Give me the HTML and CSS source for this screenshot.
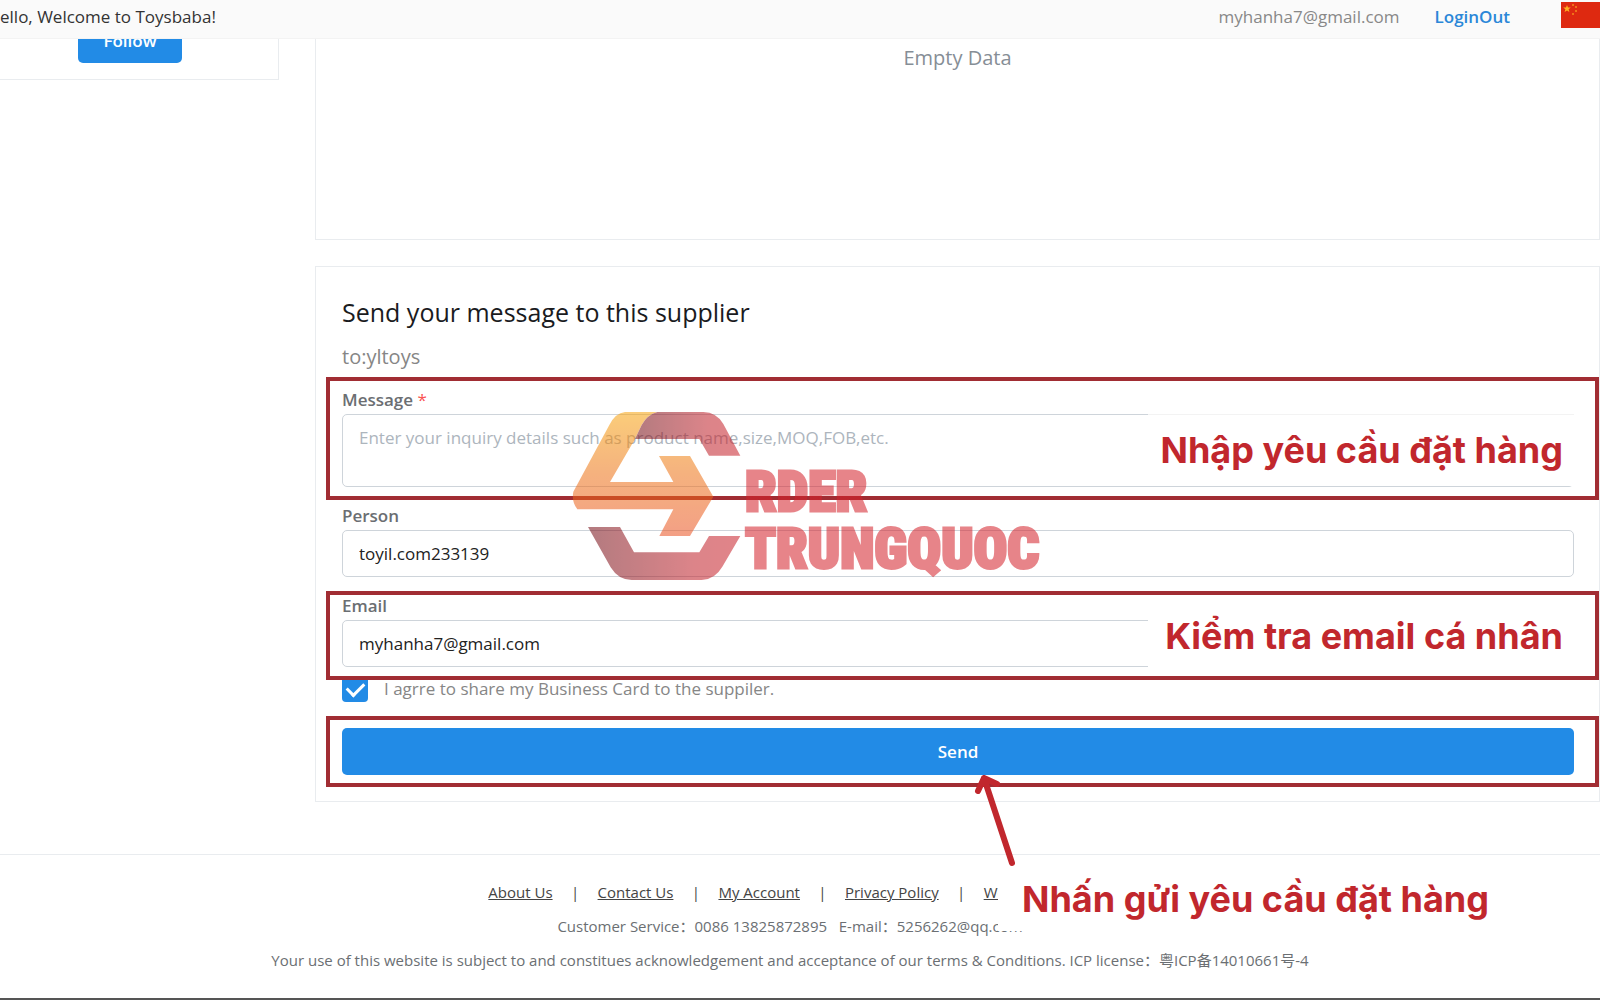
FILE: index.html
```html
<!DOCTYPE html>
<html lang="en">
<head>
    <meta charset="UTF-8">
    <meta name="viewport" content="width=device-width, initial-scale=1.0">
    <title>Toysbaba</title>
    <link rel="stylesheet" href="styles.css">
</head>
<body>
    <header class="topbar">
        <div class="welcome">ello, Welcome to Toysbaba!</div>
        <div class="account">
            <span class="user">myhanha7@gmail.com</span>
            <a class="logout" href="#">LoginOut</a>
            <svg class="flag" viewBox="0 0 39 26">
                <rect width="39" height="26" fill="#de2910"/>
                <path d="M6 3l1 2.600h2.800l-2.200 1.700.8 2.700L6 8.400 3.600 10l.8-2.700-2.200-1.700H5z" fill="#ffb020"/>
                <g fill="#f58a1c">
                    <circle cx="12" cy="3" r="1"/>
                    <circle cx="15" cy="5" r="1"/>
                    <circle cx="15" cy="9" r="1"/>
                    <circle cx="12" cy="12" r="1"/>
                </g>
            </svg>
        </div>
    </header>

    <main class="main">
        <aside class="side">
            <button class="follow" type="button">Follow</button>
        </aside>
        <div class="content">
            <section class="card empty">Empty Data</section>

            <section class="card inquiry">
                <h2>Send your message to this supplier</h2>
                <p class="to">to:yltoys</p>
                <form>
                    <div class="field field-message">
                        <label for="message">Message <em>*</em></label>
                        <textarea id="message" placeholder="Enter your inquiry details such as product name,size,MOQ,FOB,etc."></textarea>
                        <div class="mark"></div>
                        <div class="note">Nhập yêu cầu đặt hàng</div>
                    </div>
                    <div class="field">
                        <label for="person">Person</label>
                        <input type="text" id="person" value="toyil.com233139">
                    </div>
                    <div class="field field-email">
                        <label for="email">Email</label>
                        <input type="text" id="email" value="myhanha7@gmail.com">
                        <div class="mark"></div>
                        <div class="note">Kiểm tra email cá nhân</div>
                    </div>
                    <div class="agree">
                        <input type="checkbox" id="agree" checked>
                        <label for="agree">I agrre to share my Business Card to the suppiler.</label>
                    </div>
                    <div class="submit">
                        <button class="send" type="button">Send</button>
                        <div class="mark"></div>
                        <svg class="arrow" viewBox="0 0 50 100">
                            <path d="M38 90L10 5M4 18L10 5L23 11"/>
                        </svg>
                    </div>
                </form>

                <!-- watermark -->
                <svg class="watermark" viewBox="0 0 1500 570">
                    <defs>
                        <linearGradient id="orange" x1="0" y1="0" x2="0" y2="1">
                            <stop offset="0" stop-color="#f8a40d"/>
                            <stop offset="0.5" stop-color="#ed7316"/>
                            <stop offset="1" stop-color="#eb5222"/>
                        </linearGradient>
                        <linearGradient id="red" x1="0" y1="0" x2="1" y2="0">
                            <stop offset="0" stop-color="#750f18"/>
                            <stop offset="0.7" stop-color="#c1212a"/>
                            <stop offset="1" stop-color="#c9212a"/>
                        </linearGradient>
                    </defs>
                    <path fill="url(#orange)" d="M195 36H292Q262 44 245 75L225 117L150 246H340L297 168H390L460 290L390 408H298L340 328H52Q34 305 40 275L148 75Q166 39 195 36Z"/>
                    <path fill="url(#red)" d="M292 36H430Q470 37 490 72L541 167H447L418 117H225L245 75Q262 44 292 36Z"/>
                    <path fill="url(#red)" d="M84 381H180L222 457H418L447 408H541L487 500Q465 538 425 540H215Q175 540 152 502Z"/>
                    <g class="brand">
                        <text x="555" y="332">RDER</text>
                        <text x="555" y="503">TRUNGQUOC</text>
                    </g>
                </svg>
            </section>
        </div>
    </main>

    <footer class="footer">
        <nav class="links">
            <a href="#">About Us</a><i>|</i>
            <a href="#">Contact Us</a><i>|</i>
            <a href="#">My Account</a><i>|</i>
            <a href="#">Privacy Policy</a><i>|</i>
            <a class="last" href="#">We</a>
        </nav>
        <p>Customer Service：0086 13825872895 &nbsp; E-mail：5256262@qq.com</p>
        <p>Your use of this website is subject to and constitues acknowledgement and acceptance of our terms &amp; Conditions. ICP license：粤ICP备14010661号-4</p>
        <div class="note">Nhấn gửi yêu cầu đặt hàng</div>
    </footer>
</body>
</html>
```
FILE: styles.css
```css
* {
    margin: 0;
    padding: 0;
    box-sizing: border-box;
}
body {
    font-family: "Open Sans", "Noto Sans CJK SC", sans-serif;
    font-size: 17px;
    color: #6b6f73;
    background: #fff;
    overflow-x: hidden;
}
button, input, textarea {
    font-family: inherit;
}
.topbar {
    position: fixed;
    top: 0;
    left: 0;
    right: 0;
    z-index: 10;
    height: 39px;
    display: flex;
    justify-content: space-between;
    background: #fafafa;
    border-bottom: 1px solid #f3f3f3;
    line-height: 33px;
    white-space: nowrap;
}
.welcome {
    color: #333;
}
.account {
    display: flex;
}
.user {
    color: #888;
}
.logout {
    margin: 0 51px 0 35px;
    color: #2b87d8;
    font-weight: 600;
    text-decoration: none;
}
.flag {
    width: 39px;
    height: 26px;
    margin-top: 2px;
}
.main {
    display: flex;
    align-items: flex-start;
    gap: 36px;
}
.side {
    width: 279px;
    height: 80px;
    padding: 16px 0 0 78px;
    border: 1px solid #e9ecef;
    border-width: 0 1px 1px 0;
}
.follow,
.send {
    height: 47px;
    border: 0;
    border-radius: 5px;
    background: #228be6;
    color: #fff;
    font-size: 17px;
    font-weight: 600;
}
.follow {
    width: 104px;
    padding-top: 2px;
}
.content {
    flex: 1;
}
.card {
    border: 1px solid #e9ecef;
}
.empty {
    height: 240px;
    padding-top: 44px;
    border-top: 0;
    text-align: center;
    font-size: 20px;
    line-height: 28px;
    color: #868e96;
}
.inquiry {
    position: relative;
    z-index: 1;
    margin-top: 26px;
    padding: 26px 25px 26px 26px;
}
.inquiry h2 {
    font-size: 25px;
    line-height: 38px;
    font-weight: 500;
    color: #1a1b1e;
}
.to {
    font-size: 20px;
    line-height: 28px;
    margin: 12px 0 16px;
    color: #868686;
}
.field {
    position: relative;
    margin-bottom: 16px;
}
.field label {
    display: block;
    line-height: 26px;
    padding-bottom: 1px;
    font-weight: 600;
    color: #6b6e72;
}
.field em {
    font-style: normal;
    font-weight: 400;
    color: #fa5252;
}
.field input,
.field textarea {
    display: block;
    width: 100%;
    height: 47px;
    padding: 0 16px;
    border: 1px solid #ced4da;
    border-radius: 5px;
    background: #fff;
    color: #222;
    font-size: 17px;
    resize: none;
    outline: none;
}
.field textarea {
    height: 73px;
    padding: 9px 16px;
    line-height: 28px;
}
.field textarea::placeholder {
    color: #adb5bd;
}
.mark {
    position: absolute;
    left: -16px;
    right: -25px;
    top: -10px;
    bottom: -13px;
    border: 4px solid #a12d33;
    pointer-events: none;
}
.field-email .mark {
    top: -2px;
}
.submit .mark {
    top: -12px;
    bottom: -12px;
}
.note {
    position: absolute;
    background: #fff;
    color: #c1272d;
    font-family: Inter, sans-serif;
    font-size: 36px;
    line-height: 44px;
    font-weight: 700;
    white-space: nowrap;
}
.field .note {
    right: 0;
    bottom: 1px;
    width: 426px;
    padding: 13px 11px 14px 0;
    border-top: 1px solid #f3f3f3;
    text-align: right;
}
.field-email .note {
    bottom: 0;
    padding: 0 11px 9px 0;
    border-top: 0;
}
.agree {
    display: flex;
    align-items: center;
    gap: 16px;
    height: 26px;
    margin: -7px 0 26px;
    line-height: 26px;
    color: #868686;
}
.agree input {
    appearance: none;
    width: 26px;
    height: 26px;
    border-radius: 4px;
    background: #228be6;
    display: grid;
    place-items: center;
}
.agree input:checked::before {
    content: "";
    width: 14px;
    height: 8px;
    border: solid #fff;
    border-width: 0 0 3px 3px;
    transform: translateY(-2px) rotate(-45deg);
}
.submit {
    position: relative;
}
.send {
    display: block;
    width: 100%;
}
.arrow {
    position: absolute;
    left: 50%;
    top: 45px;
    width: 50px;
    height: 100px;
    margin-left: 16px;
    fill: none;
    stroke: #c1272d;
    stroke-width: 6;
    stroke-linecap: round;
    stroke-linejoin: round;
}
.watermark {
    position: absolute;
    left: 244px;
    top: 133px;
    width: 500px;
    height: 190px;
    opacity: 0.55;
    pointer-events: none;
}
.brand {
    font-family: "Roboto Condensed", Roboto, sans-serif;
    font-size: 168px;
    font-weight: 900;
    fill: #d5212a;
    stroke: #d5212a;
    stroke-width: 9;
}
.footer {
    position: relative;
    margin-top: 52px;
    padding: 20px 20px 21px 0;
    border-top: 1px solid #e9ecef;
    border-bottom: 2px solid #555;
    text-align: center;
    font-size: 15px;
    line-height: 34px;
}
.links {
    display: flex;
    justify-content: center;
}
.links a {
    color: #444;
}
.links i {
    width: 45px;
    font-style: normal;
    color: #444;
}
.links .last {
    width: 108px;
    text-align: left;
}
.footer .note {
    left: 998px;
    top: 20px;
    padding: 2px 0 10px 24px;
}
```
